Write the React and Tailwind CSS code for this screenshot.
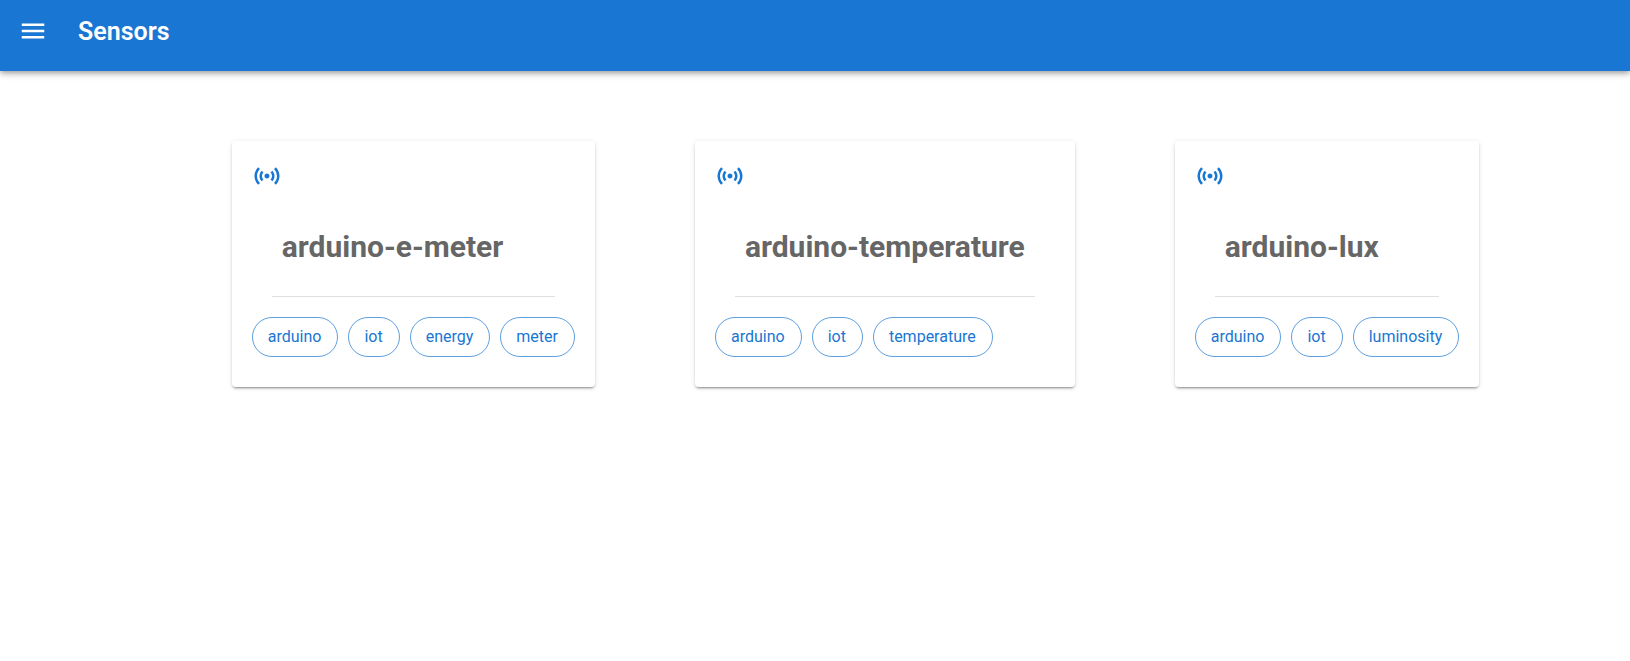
import { MdMenu, MdSensors } from "react-icons/md";

const sensors = [
  { name: "arduino-e-meter", tags: ["arduino", "iot", "energy", "meter"] },
  { name: "arduino-temperature", tags: ["arduino", "iot", "temperature"] },
  { name: "arduino-lux", tags: ["arduino", "iot", "luminosity"] },
];

function AppBar() {
  return (
    <header className="flex items-start bg-[#1976d2] px-2.5 pt-3 pb-5 text-white shadow-[0_2px_4px_-1px_rgba(0,0,0,0.2),0_4px_5px_0_rgba(0,0,0,0.14),0_1px_10px_0_rgba(0,0,0,0.12)]">
      <button type="button" aria-label="Open menu" className="px-2 py-1">
        <MdMenu className="size-[30px]" aria-hidden="true" />
      </button>
      <h1 className="ml-[22px] text-[25px] leading-[39px] font-semibold">Sensors</h1>
    </header>
  );
}

function SensorCard({ name, tags }) {
  return (
    <li className="rounded bg-white p-5 pb-[30px] shadow-[0_3px_1px_-2px_rgba(0,0,0,0.2),0_2px_2px_0_rgba(0,0,0,0.14),0_1px_5px_0_rgba(0,0,0,0.12)]">
      <MdSensors className="size-[30px] text-[#1976d2]" aria-hidden="true" />
      <h2 className="px-[30px] pt-9 pb-[29px] text-[30px] leading-10 font-bold text-[#666666]">
        {name}
      </h2>
      <hr className="mx-5 mb-5 border-[#e0e0e0]" />
      <ul className="flex gap-2.5">
        {tags.map((tag) => (
          <li
            key={tag}
            className="flex h-10 items-center rounded-full border border-[#1976d2]/70 pr-4 pl-[15px] text-base text-[#1976d2]"
          >
            {tag}
          </li>
        ))}
      </ul>
    </li>
  );
}

export default function App() {
  return (
    <div className="min-h-screen bg-white font-[Roboto,sans-serif]">
      <AppBar />
      <main className="pt-[70px] pl-[81px]">
        <ul className="flex flex-wrap justify-center gap-[100px]">
          {sensors.map((sensor) => (
            <SensorCard key={sensor.name} name={sensor.name} tags={sensor.tags} />
          ))}
        </ul>
      </main>
    </div>
  );
}
